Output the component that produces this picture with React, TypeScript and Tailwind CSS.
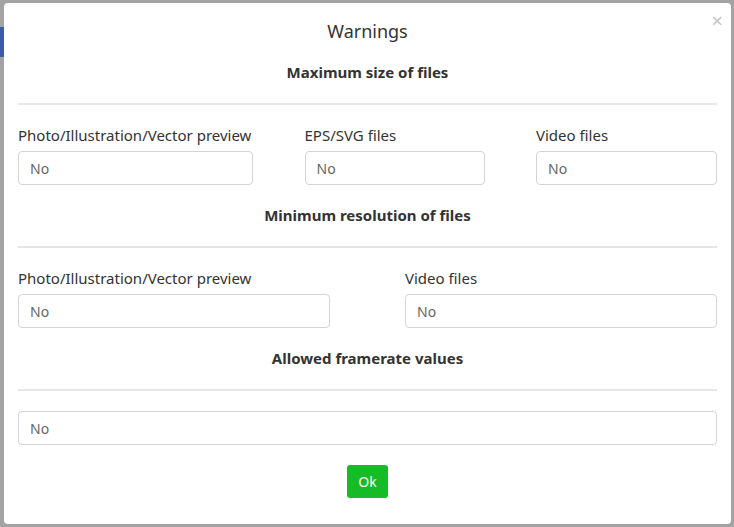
import React from "react";

function Field({ label, className }: { label: string; className: string }) {
  return (
    <div className={className}>
      <div className="text-[15px] leading-[20px] text-[#333] mb-[6px]">{label}</div>
      <div className="h-[34px] border border-[#d4d4d4] rounded-[4px] flex items-center px-[11px] text-[14px] text-[#666]">No</div>
    </div>
  );
}

function Section({ title }: { title: string }) {
  return (
    <div className="flex flex-col">
      <div className="text-center font-bold text-[15px] leading-[20px] text-[#333]">{title}</div>
      <div className="h-[2px] bg-[#e6e6e6] mt-[21px] mb-[22px]" />
    </div>
  );
}

export default function App() {
  return (
    <div
      className="w-[734px] h-[527px] bg-[#a3a3a3] flex overflow-hidden"
      style={{ fontFamily: '"Noto Sans", "Open Sans", sans-serif' }}
    >
      <div className="w-[4px] flex flex-col shrink-0">
        <div className="h-[27px]" />
        <div className="h-[30px] bg-[#3b5ca6]" />
      </div>
      <div className="mt-[3px] mb-[3px] w-[727px] bg-white rounded-[4px] relative flex flex-col px-[14px]">
        <div className="absolute right-[8px] top-[7px] text-[#c4c4c4] text-[20px] leading-[22px]">×</div>
        <div className="text-center text-[18px] leading-[24px] text-[#333] mt-[16px]">Warnings</div>
        <div className="mt-[19px]">
          <Section title="Maximum size of files" />
        </div>
        <div className="flex justify-between -mt-[2px]">
          <Field label="Photo/Illustration/Vector preview" className="w-[235px]" />
          <Field label="EPS/SVG files" className="w-[180px]" />
          <Field label="Video files" className="w-[181px]" />
        </div>
        <div className="mt-[20px]">
          <Section title="Minimum resolution of files" />
        </div>
        <div className="flex justify-between -mt-[2px]">
          <Field label="Photo/Illustration/Vector preview" className="w-[312px]" />
          <Field label="Video files" className="w-[312px]" />
        </div>
        <div className="mt-[20px]">
          <Section title="Allowed framerate values" />
        </div>
        <div className="-mt-[2px] h-[34px] border border-[#d4d4d4] rounded-[4px] flex items-center px-[11px] text-[14px] text-[#666]">No</div>
        <div className="flex justify-center mt-[20px]">
          <div className="w-[41px] h-[33px] rounded-[3px] bg-[#16bb26] text-white text-[14px] flex items-center justify-center">Ok</div>
        </div>
      </div>
    </div>
  );
}
